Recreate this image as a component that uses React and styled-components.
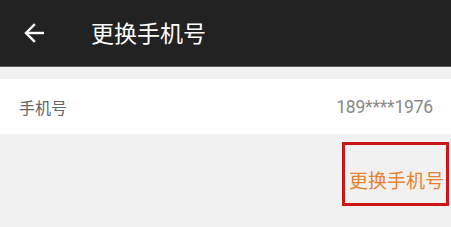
import React from "react"
import styled, { createGlobalStyle } from "styled-components"

const GlobalStyle = createGlobalStyle`
    html, body {
        margin: 0;
        padding: 0;
        background: #f1f1f1;
        font-family: Roboto, "Noto Sans CJK SC", sans-serif;
    }
`

const Page = styled.div`
    width: 451px;
    height: 227px;
    background: #f1f1f1;
    overflow: hidden;
`
const Header = styled.div`
    height: 66px;
    background: #222222;
    border-bottom: 1px solid #5a5a5a;
    display: flex;
    align-items: center;
    color: #ffffff;
`
const BackButton = styled.div`
    width: 20px;
    height: 22px;
    margin-left: 24px;
    margin-right: 47px;
    display: flex;
    align-items: center;
    justify-content: center;
`
const Title = styled.h1`
    margin: 0;
    font-size: 23px;
    font-weight: 400;
    font-family: "Noto Sans CJK SC", sans-serif;
    line-height: 1;
    padding-bottom: 2px;
`
const Row = styled.div`
    margin-top: 12px;
    height: 55px;
    background: #ffffff;
    display: flex;
    align-items: center;
    justify-content: space-between;
    padding: 0 18px 0 19px;
`
const Label = styled.span`
    font-size: 16px;
    color: #666666;
    font-family: "Noto Sans CJK SC", sans-serif;
`
const Value = styled.span`
    font-size: 17.5px;
    color: #888888;
    letter-spacing: -0.2px;
`
const Actions = styled.div`
    display: flex;
    justify-content: flex-end;
    padding: 8px 2px 0 0;
`
const ChangeButton = styled.div`
    width: 99px;
    height: 48px;
    border: 3px solid #cc1616;
    display: flex;
    align-items: center;
    justify-content: flex-end;
    padding: 10px 2px 0 0;
    box-sizing: content-box;
    color: #e8822e;
    font-size: 19px;
    font-family: "Noto Sans CJK SC", sans-serif;
`

const App = () => {
    return (
        <Page>
            <GlobalStyle />
            <Header>
                <BackButton>
                    <svg width="20" height="20" viewBox="0 0 20 20" fill="none" stroke="#ffffff" strokeWidth="2.4" strokeLinecap="square">
                        <path d="M19 10H3" />
                        <path d="M10 2L2 10L10 18" />
                    </svg>
                </BackButton>
                <Title>更换手机号</Title>
            </Header>
            <Row>
                <Label>手机号</Label>
                <Value>189****1976</Value>
            </Row>
            <Actions>
                <ChangeButton>更换手机号</ChangeButton>
            </Actions>
        </Page>
    )
}

export default App
